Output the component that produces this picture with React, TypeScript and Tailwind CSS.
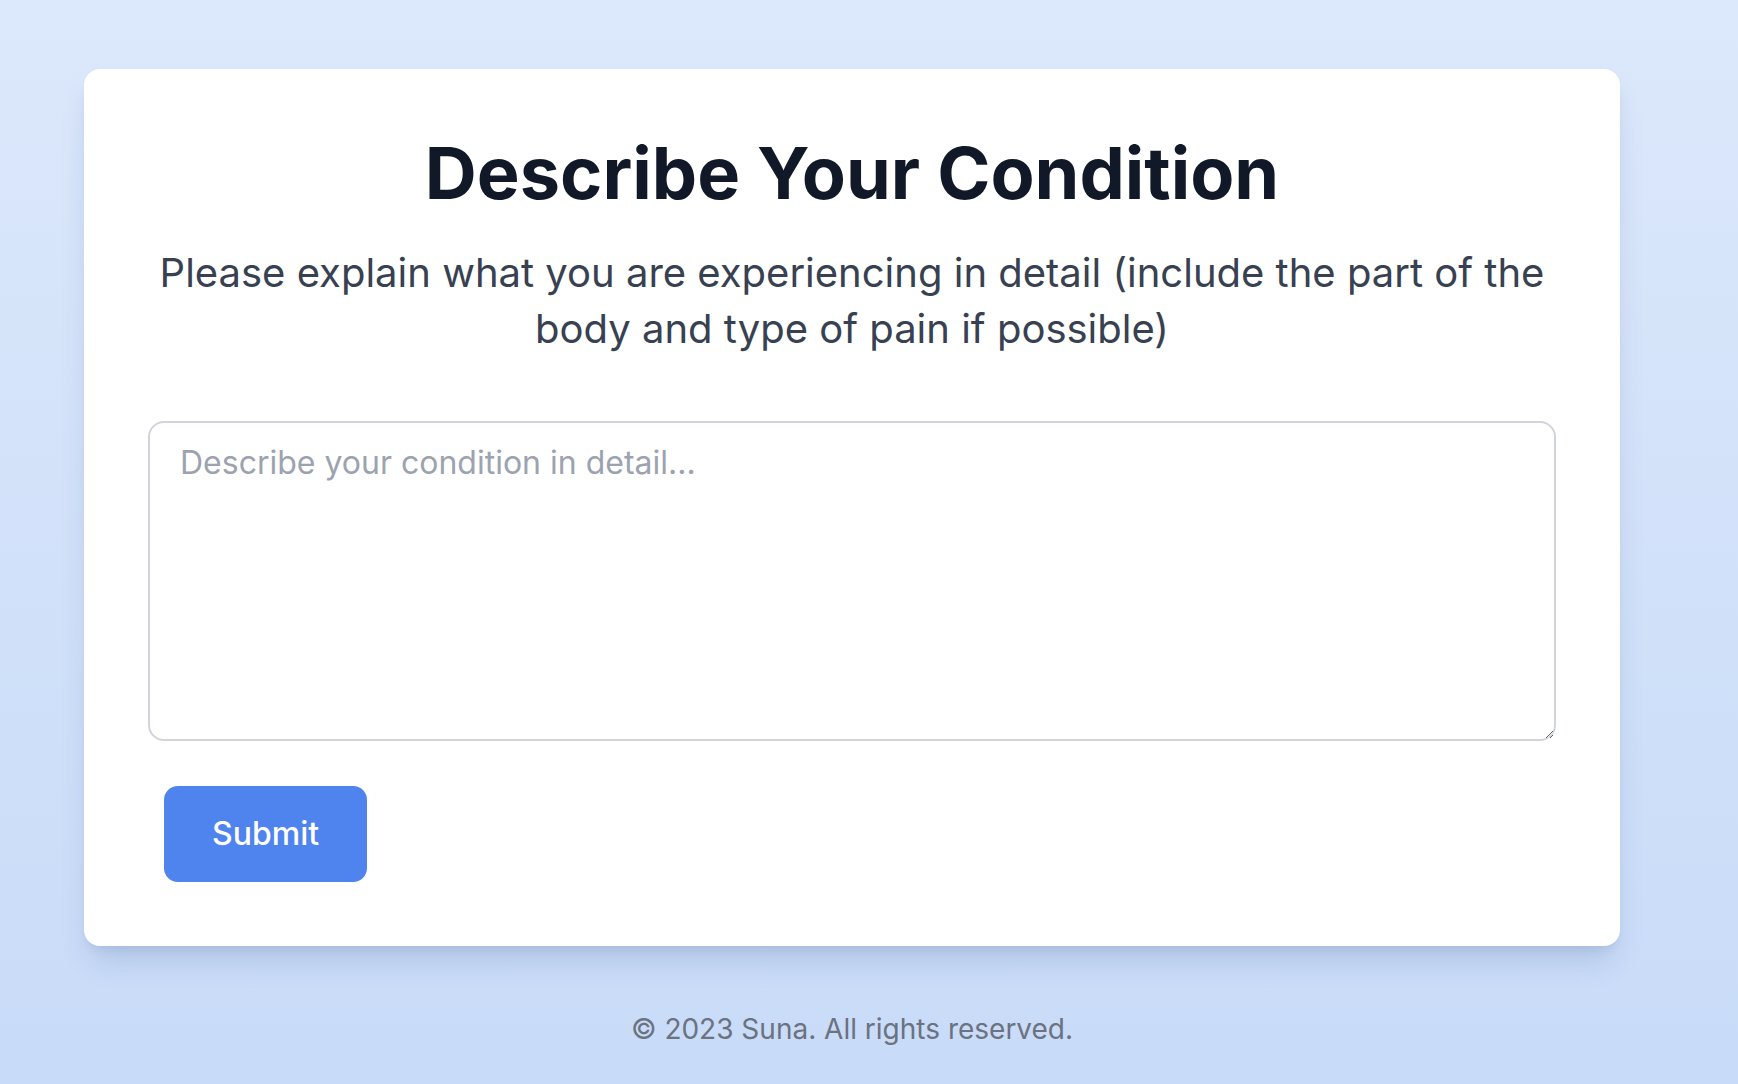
import React from "react";

export default function App() {
  return (
    <div
      className="min-h-[1084px] w-full bg-gradient-to-b from-[#dce8fb] to-[#c8dbf8]"
      style={{ fontFamily: "Inter, 'Noto Sans', sans-serif" }}
    >
      <div className="w-[1704px] pt-[69px] flex flex-col items-center">
        <div className="w-[1536px] bg-white rounded-[16px] p-[64px] shadow-[0_20px_30px_-6px_rgba(30,60,120,0.15),0_8px_12px_-6px_rgba(30,60,120,0.1)]">
          <h1 className="text-center text-[72px] leading-[80px] font-bold text-[#111827] mb-[32px]">
            Describe Your Condition
          </h1>
          <p className="text-center text-[40px] leading-[56px] text-[#374151] mb-[64px] px-[8px]">
            Please explain what you are experiencing in detail (include the part of the body and type of pain if possible)
          </p>
          <textarea
            className="block w-full h-[320px] border-2 border-[#d1d5db] rounded-[16px] pt-[16px] pb-[30px] px-[30px] text-[32px] leading-[48px] text-[#111827] placeholder:text-[#9ca3af] outline-none"
            placeholder="Describe your condition in detail..."
          />
          <button className="mt-[45px] ml-[16px] h-[96px] px-[48px] rounded-[14px] bg-[#4f84ef] text-white text-[32px] font-medium">
            Submit
          </button>
        </div>
        <footer className="mt-[63px] text-[28px] leading-[40px] text-[#6b7280]">
          © 2023 Suna. All rights reserved.
        </footer>
      </div>
    </div>
  );
}
